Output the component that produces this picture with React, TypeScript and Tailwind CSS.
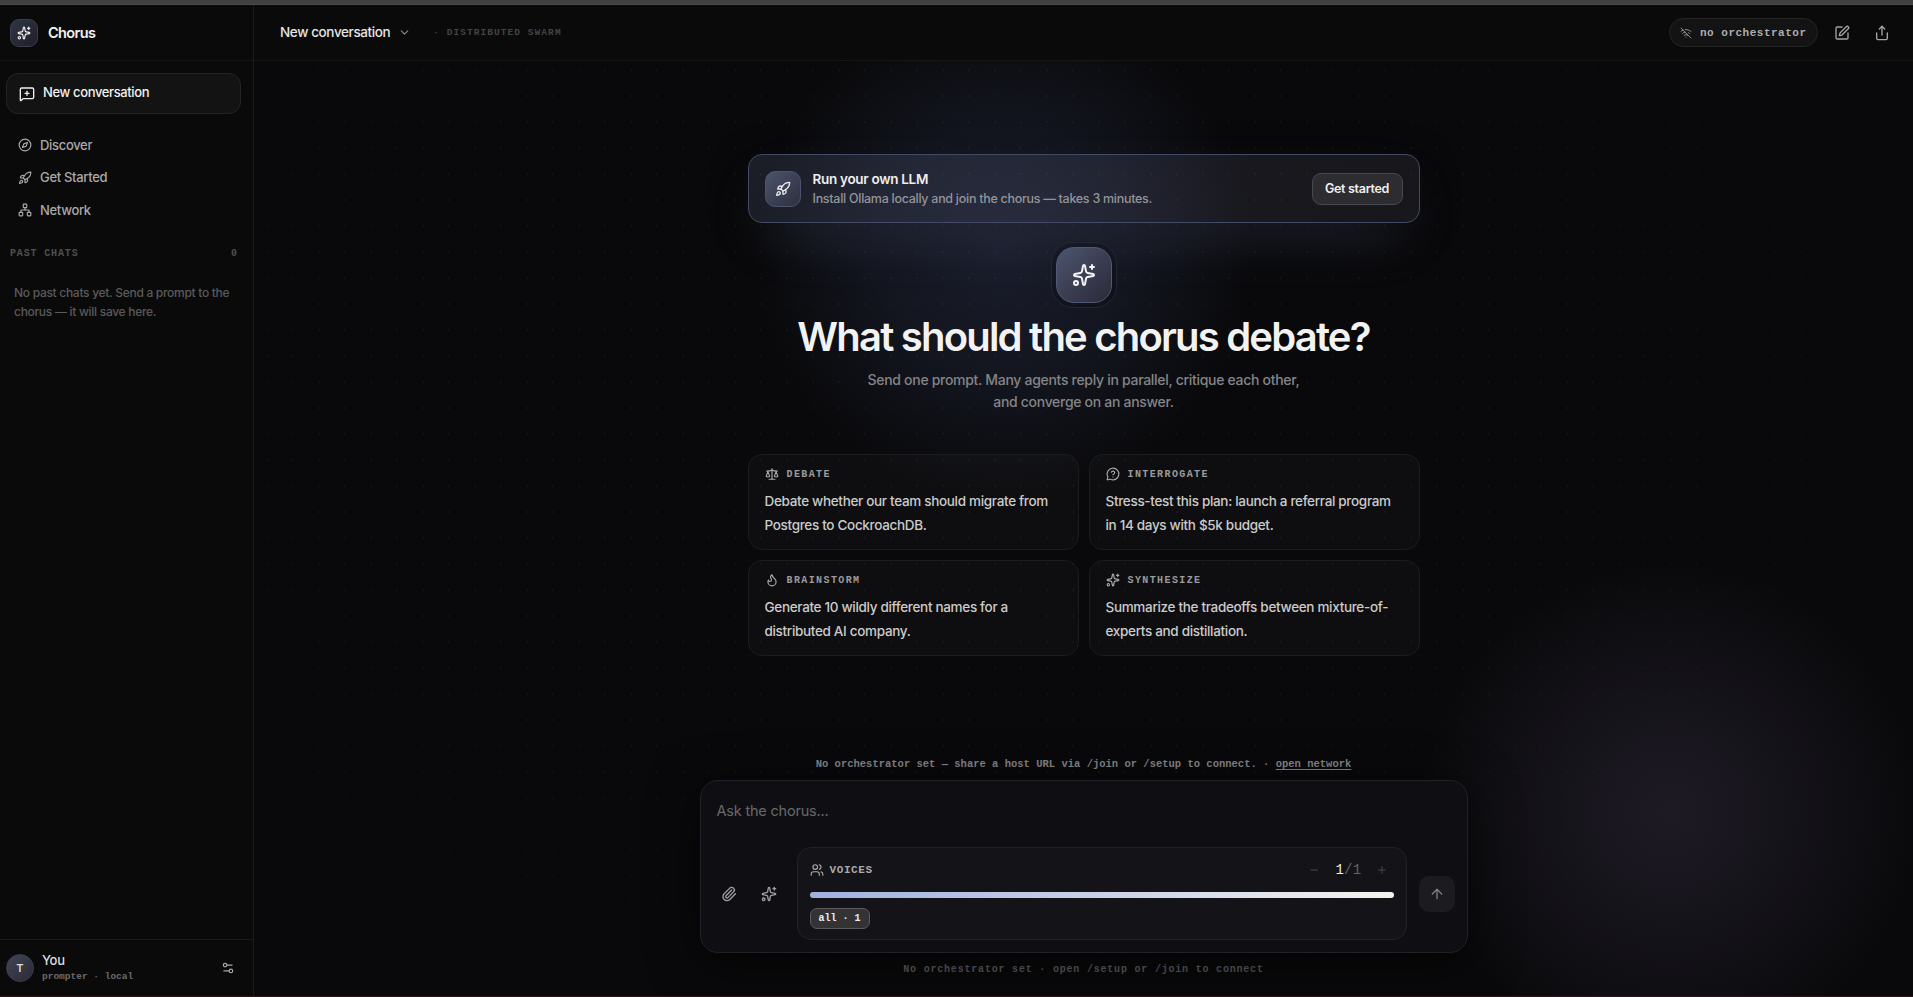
import {
  ArrowUp,
  ChevronDown,
  Compass,
  Flame,
  MessageCircleQuestionMark,
  MessageSquarePlus,
  Minus,
  Network,
  Paperclip,
  Plus,
  Rocket,
  Scale,
  Settings2,
  Share,
  Sparkles,
  SquarePen,
  Users,
  WifiOff,
} from "lucide-react";

const nav = [
  { label: "Discover", icon: Compass },
  { label: "Get Started", icon: Rocket },
  { label: "Network", icon: Network },
];

const prompts = [
  {
    tag: "Debate",
    icon: Scale,
    lines: ["Debate whether our team should migrate from", "Postgres to CockroachDB."],
  },
  {
    tag: "Interrogate",
    icon: MessageCircleQuestionMark,
    lines: ["Stress-test this plan: launch a referral program", "in 14 days with $5k budget."],
  },
  {
    tag: "Brainstorm",
    icon: Flame,
    lines: ["Generate 10 wildly different names for a", "distributed AI company."],
  },
  {
    tag: "Synthesize",
    icon: Sparkles,
    lines: ["Summarize the tradeoffs between mixture-of-", "experts and distillation."],
  },
];

function Sidebar() {
  return (
    <aside className="w-[254px] shrink-0 flex flex-col bg-[#0a0a0a] border-r border-[#1a1a1b]">
      <div className="h-14 shrink-0 flex items-center gap-2.5 pl-2.5 border-b border-[#161617]">
        <div className="size-7 rounded-[9px] border border-[#3b3f4c] bg-linear-to-br from-[#303543] to-[#201f29] flex items-center justify-center">
          <Sparkles size={14} className="text-[#f0f0f0]" />
        </div>
        <span className="pt-px text-[14.5px] font-semibold tracking-[-0.6px] text-[#f2f2f2]">Chorus</span>
      </div>

      <button className="mt-3 ml-1.5 w-[235px] h-[41px] shrink-0 flex items-center gap-2 pl-3 rounded-xl border border-[#242425] bg-[#131313] text-[13px] font-medium tracking-[-0.37px] text-[#f0f0f0]">
        <MessageSquarePlus size={16} />
        <span className="pb-px">New conversation</span>
      </button>

      <nav className="mt-[15px] flex flex-col">
        {nav.map(({ label, icon: Icon }) => (
          <a
            key={label}
            className="h-[32.5px] flex items-center gap-2 pl-[18px] text-[13px] font-medium tracking-[-0.32px] text-[#a9a9aa]"
          >
            <Icon size={14} />
            {label}
          </a>
        ))}
      </nav>

      <div className="mt-[19px] pl-2.5 pr-4 flex justify-between font-['Liberation_Mono',monospace] font-bold text-[10px] leading-4 tracking-[0.85px] text-[#505051]">
        <span>PAST CHATS</span>
        <span className="tracking-normal">0</span>
      </div>
      <p className="mt-[21px] pl-3.5 text-[12px] leading-[19px] font-medium tracking-[-0.29px] text-[#5a5a5b] whitespace-nowrap">
        No past chats yet. Send a prompt to the
        <br />
        chorus — it will save here.
      </p>

      <div className="mt-auto h-[57px] shrink-0 flex items-center gap-2 pl-1.5 pr-[18px] border-t border-[#1a1a1b]">
        <div className="size-7 rounded-full border border-[#3b3e4b] bg-linear-to-br from-[#404556] to-[#2c2a37] flex items-center justify-center text-[11px] font-semibold text-[#dcdcdc]">
          T
        </div>
        <div className="flex-1">
          <p className="text-[13px] leading-4 font-medium tracking-[-0.3px] text-[#dedede]">You</p>
          <p className="pt-px font-['Liberation_Mono',monospace] font-bold text-[9.5px] leading-4 text-[#6a6a6c]">
            prompter · local
          </p>
        </div>
        <Settings2 size={14} className="text-[#a9a9aa]" />
      </div>
    </aside>
  );
}

function Header() {
  return (
    <header className="relative h-14 shrink-0 flex items-center pl-[26px] pr-[23px] bg-[#0a0a0a] border-b border-[#161617]">
      <span className="text-[13.5px] font-medium tracking-[-0.38px] text-[#e6e6e6]">New conversation</span>
      <ChevronDown size={13} className="ml-2 text-[#8a8a8b]" />
      <span className="ml-[22px] pt-0.5 font-['Liberation_Mono',monospace] font-bold text-[9.5px] tracking-[1.05px] text-[#444446]">
        · DISTRIBUTED SWARM
      </span>
      <div className="ml-auto h-[29px] w-[149px] flex items-center gap-2 pl-2.5 rounded-full border border-[#242425] bg-[#131313]">
        <WifiOff size={12} className="text-[#8a8a8b]" />
        <span className="pt-px font-['Liberation_Mono',monospace] font-bold text-[11px] tracking-[0.5px] text-[#adadae]">
          no orchestrator
        </span>
      </div>
      <SquarePen size={16} className="ml-4 text-[#a5a5a6]" />
      <Share size={16} className="ml-6 text-[#a5a5a6]" />
    </header>
  );
}

function SetupBanner() {
  return (
    <div className="h-[69px] flex items-center px-4 rounded-[14px] border border-[#434b64] bg-[linear-gradient(120deg,rgba(160,180,240,0.12),rgba(190,180,220,0.08))] shadow-[0_24px_60px_-20px_rgba(150,165,220,0.28),0_8px_40px_rgba(0,0,0,0.25)]">
      <div className="size-9 rounded-[10px] border border-[#4c546b] bg-linear-to-br from-[#4b536b] to-[#2f3040] flex items-center justify-center">
        <Rocket size={16} className="text-[#ececec]" />
      </div>
      <div className="ml-3">
        <p className="text-[13.5px] leading-5 font-semibold tracking-[-0.3px] text-[#efefef]">Run your own LLM</p>
        <p className="text-[12.5px] leading-[19px] font-medium tracking-[-0.28px] text-[#93949b]">
          Install Ollama locally and join the chorus — takes 3 minutes.
        </p>
      </div>
      <button className="ml-auto w-[91px] h-8 pt-px rounded-[9px] border border-[#48484d] bg-[#2c2c31] text-[12.5px] font-semibold tracking-[-0.3px] text-[#f0f0f0]">
        Get started
      </button>
    </div>
  );
}

function Composer() {
  return (
    <div className="w-[768px] h-[173px] rounded-[18px] border border-[#222226] bg-[#0f0f13] shadow-[0_10px_50px_rgba(0,0,0,0.6)]">
      <p className="pt-5 pl-4 text-[14.5px] leading-5 tracking-[-0.2px] text-[#68686b]">Ask the chorus...</p>
      <div className="mt-[26px] pl-3 pr-3 flex items-center">
        <Paperclip size={16} className="ml-2 text-[#a0a0a2]" />
        <Sparkles size={16} className="ml-6 text-[#a0a0a2]" />
        <div className="ml-5 w-[610px] h-[93px] rounded-[14px] border border-[#222226] bg-[#141418] px-3">
          <div className="mt-[11px] h-[22px] flex items-center text-[#a9a9aa]">
            <Users size={14} />
            <span className="ml-1.5 font-['Liberation_Mono',monospace] text-[11px] font-bold tracking-[0.6px]">VOICES</span>
            <Minus size={12} className="ml-auto text-[#464649]" />
            <span className="ml-[15px] font-['Liberation_Mono',monospace] text-[14px] tracking-[0.3px] text-[#636366]">
              <span className="text-[#f0f0f0]">1</span>/1
            </span>
            <Plus size={12} className="ml-3.5 mr-1.5 text-[#464649]" />
          </div>
          <div className="mt-[11px] h-1.5 rounded-full bg-linear-to-r from-[#a0b0e0] to-[#f5f3ee]" />
          <span className="mt-2.5 w-[60px] h-[21px] flex items-center justify-center rounded-[7px] border border-[#5c5c5e] bg-[#333335] font-['Liberation_Mono',monospace] text-[10px] font-bold text-[#ededed]">
            all · 1
          </span>
        </div>
        <button className="ml-3 size-9 rounded-[10px] bg-[#1c1c20] flex items-center justify-center text-[#7f7f82]">
          <ArrowUp size={16} />
        </button>
      </div>
    </div>
  );
}

export default function App() {
  return (
    <div className="h-[997px] overflow-hidden flex flex-col bg-[#09090b] font-[Inter,sans-serif] antialiased">
      <div className="h-[5px] shrink-0 bg-[#414141] border-b border-[#4c4c4c]" />
      <div className="h-[991px] flex">
        <Sidebar />
        <main className="relative flex-1 flex flex-col overflow-hidden">
          {/* ambient glows and dot grid */}
          <div className="absolute left-[490px] -top-[13px] size-[520px] rounded-full bg-[radial-gradient(closest-side,rgba(90,108,170,0.2),rgba(90,108,170,0.12)_50%,transparent_96%)]" />
          <div className="absolute left-[1166px] top-[557px] size-[500px] rounded-full bg-[radial-gradient(closest-side,rgba(138,116,170,0.16),rgba(138,116,170,0.09)_50%,transparent)]" />
          <div className="absolute inset-0 bg-[radial-gradient(circle,rgba(255,255,255,0.035)_1px,transparent_1px)] bg-size-[26px_26px] mask-[radial-gradient(ellipse_at_42%_40%,black_45%,transparent_85%)]" />

          <Header />
          <section className="relative flex flex-col items-center">
            <div className="mt-[93px] w-[672px]">
              <SetupBanner />
            </div>
            <div className="mt-[19px] p-1 rounded-[22px] border border-[#222634] bg-black/15">
              <div className="size-14 rounded-[18px] border border-[#515a75] bg-linear-to-br from-[#4c5570] to-[#2b2938] flex items-center justify-center">
                <Sparkles size={24} className="text-[#f4f4f4]" />
              </div>
            </div>
            <h1 className="mt-[7px] text-[40px] leading-[44px] font-semibold tracking-[-1.8px] text-[#f2f2f2]">
              What should the chorus debate?
            </h1>
            <p className="mt-2.5 text-center text-[14px] leading-[22px] font-medium tracking-[-0.3px] text-[#848487]">
              Send one prompt. Many agents reply in parallel, critique each other,
              <br />
              and converge on an answer.
            </p>
            <div className="mt-[41px] w-[672px] grid grid-cols-2 gap-2.5">
              {prompts.map(({ tag, icon: Icon, lines }) => (
                <div key={tag} className="h-24 rounded-[14px] border border-[#1c1c1e] bg-white/[0.025] pt-[11px] px-4">
                  <div className="h-4 flex items-center gap-2 text-[#a9a9aa]">
                    <Icon size={14} />
                    <span className="pt-px font-['Liberation_Mono',monospace] font-bold text-[10px] uppercase tracking-[1.4px] text-[#9b9b9c]">
                      {tag}
                    </span>
                  </div>
                  <p className="mt-[7px] text-[13.5px] leading-6 font-medium tracking-[-0.32px] text-[#cbcbcb] whitespace-nowrap">
                    {lines[0]}
                    <br />
                    {lines[1]}
                  </p>
                </div>
              ))}
            </div>
          </section>

          <footer className="relative mt-auto flex flex-col items-center font-['Liberation_Mono',monospace] font-bold">
            <p className="text-[10.5px] leading-4 text-[#858587]">
              No orchestrator set — share a host URL via /join or /setup to connect. ·{" "}
              <a className="underline underline-offset-2">open network</a>
            </p>
            <div className="mt-2 font-[Inter,sans-serif] font-normal">
              <Composer />
            </div>
            <p className="mt-[9px] mb-[18px] text-[10px] leading-4 tracking-[0.8px] text-[#464648]">
              No orchestrator set · open /setup or /join to connect
            </p>
          </footer>
        </main>
      </div>
      <div className="h-px shrink-0 bg-[#2b1a1d]" />
    </div>
  );
}
